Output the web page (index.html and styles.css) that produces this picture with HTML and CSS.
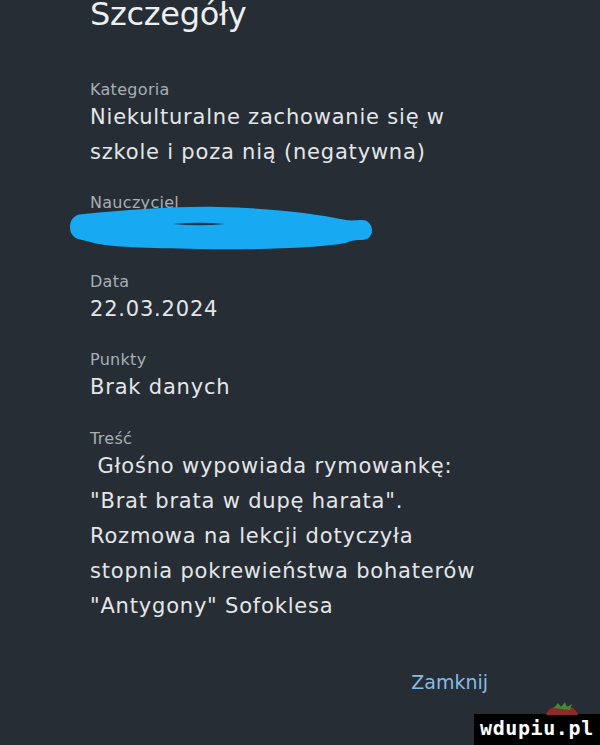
FILE: index.html
```html
<!DOCTYPE html>
<html lang="pl">
<head>
  <meta charset="UTF-8">
  <title>Szczegóły uwagi</title>
  <link rel="stylesheet" href="styles.css">
</head>
<body>

<div class="sheet">
  <h1 class="title">Szczegóły</h1>

  <div class="field">
    <div class="label">Kategoria</div>
    <div class="value">Niekulturalne zachowanie się w szkole i poza nią (negatywna)</div>
  </div>

  <div class="field redacted">
    <div class="label">Nauczyciel</div>
    <div class="value">&nbsp;</div>
    <!-- zamazane nazwisko -->
    <svg class="scribble" width="310" height="46" viewBox="0 0 310 46">
      <path d="M2 21 C2 12 8 8 16 8 C60 4 110 0 150 1 C200 2 245 7 278 14 C284 15 288 14 294 14 C300 14 304 19 304 24 C304 30 300 34 294 34 C288 34 284 34 278 37 C250 42 190 44 130 43 C80 42 40 41 26 37 C20 35 14 34 10 33 C5 31 2 27 2 21 Z" fill="#17a9f1"/>
      <path d="M105 18 Q131 15.5 157 18 Q131 20.5 105 18 Z" fill="#1b3550"/>
    </svg>
  </div>

  <div class="field">
    <div class="label">Data</div>
    <div class="value">22.03.2024</div>
  </div>

  <div class="field">
    <div class="label">Punkty</div>
    <div class="value">Brak danych</div>
  </div>

  <div class="field">
    <div class="label">Treść</div>
    <div class="value content"> Głośno wypowiada rymowankę: "Brat brata w dupę harata". Rozmowa na lekcji dotyczyła stopnia pokrewieństwa bohaterów "Antygony" Sofoklesa</div>
  </div>

  <div class="actions">
    <button class="close">Zamknij</button>
  </div>
</div>

<div class="watermark">
  <svg class="wm-logo" width="40" height="14" viewBox="0 0 40 14">
    <path d="M4 13 C6 6 14 3 20 4 C27 3 34 6 36 13 Z" fill="#8e2a2a"/>
    <path d="M12 6 L16 1 L19 5 L23 0 L25 5 L30 2 L28 8 Z" fill="#3f8a34"/>
  </svg>
  <span class="wm-text">wdupiu.pl</span>
</div>

</body>
</html>
```

FILE: styles.css
```css
body {
  margin: 0;
  background: #262d34;
  font-family: "DejaVu Sans", sans-serif;
  color: #e3e6e9;
}

.sheet {
  width: 400px;
  padding-left: 90px;
}

.title {
  margin: -4px 0 47.5px;
  font-size: 32px;
  line-height: 36px;
  font-weight: normal;
  letter-spacing: -0.3px;
  color: #eceef0;
}

.field { position: relative; }
.field + .field { margin-top: 23.5px; }

.label {
  font-size: 16px;
  line-height: 20px;
  letter-spacing: 0.3px;
  color: #a9afb5;
}

.value {
  font-size: 21px;
  line-height: 35px;
  letter-spacing: 0.8px;
}

.content { white-space: pre-wrap; }

.scribble {
  position: absolute;
  left: -22px;
  top: 12.5px;
}

.actions {
  display: flex;
  justify-content: flex-end;
  margin-top: 46px;
  padding-right: 2px;
}

.close {
  border: none;
  background: none;
  padding: 0;
  font-family: inherit;
  font-size: 19px;
  line-height: 24px;
  color: #86bde3;
  cursor: pointer;
}

.watermark {
  position: fixed;
  right: 0;
  bottom: 0;
}

.wm-logo {
  position: absolute;
  right: 18px;
  top: -12px;
}

.wm-text {
  display: block;
  width: 126px;
  height: 31px;
  box-sizing: border-box;
  padding-left: 6px;
  background: #000;
  color: #fff;
  font-family: "DejaVu Sans Mono", monospace;
  font-weight: bold;
  font-size: 20px;
  line-height: 29px;
  letter-spacing: 0.6px;
}
```
